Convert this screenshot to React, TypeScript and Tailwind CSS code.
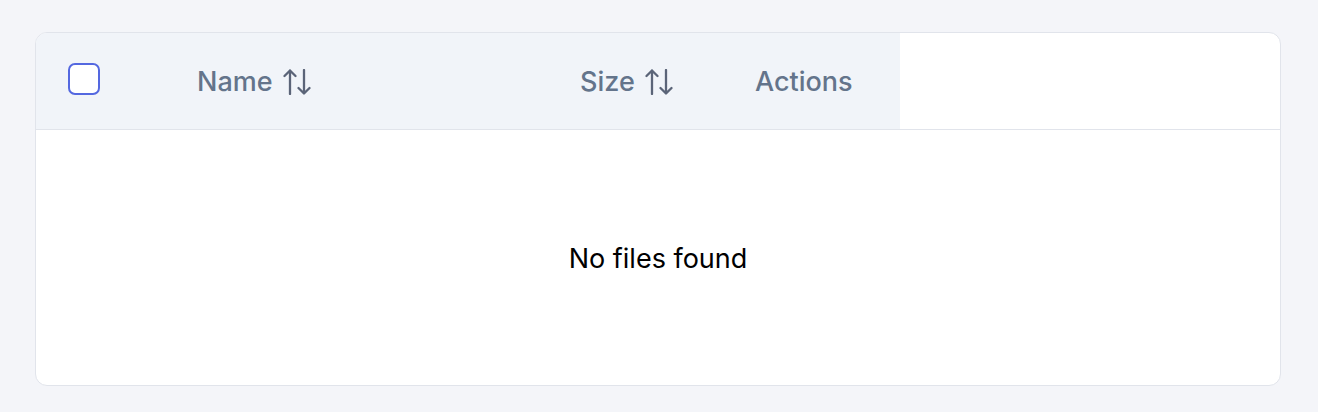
// Empty file table: header with sortable columns, single "no files" row.
function SortIcon() {
  return (
    <svg
      width="28"
      height="26"
      viewBox="0 0 28 26"
      fill="none"
      stroke="#5b6478"
      strokeWidth="2.3"
      strokeLinecap="round"
      strokeLinejoin="round"
    >
      <path d="M7 25V1.5M1.5 7 7 1.5 12.5 7" />
      <path d="M21 1v23.5M15.5 19 21 24.5 26.5 19" />
    </svg>
  );
}

export default function App() {
  return (
    <div
      className="min-h-screen bg-[#f4f5f9] pl-[35px] pr-[37px] pt-8"
      style={{ fontFamily: "Inter, 'Noto Sans', sans-serif" }}
    >
      <div className="h-[354px] overflow-hidden rounded-xl border border-[#e1e4eb] bg-white">
        <div className="flex h-[97px] border-b border-[#e1e4eb]">
          <div className="flex w-[864px] items-center bg-[#f1f4f9] pt-[2px] text-[27px] font-medium text-[#64748b]">
            <div className="-mt-[6px] flex w-[161px] pl-8">
              <span className="h-[32px] w-[32px] rounded-[7px] border-2 border-[#5468e0] bg-white" />
            </div>
            <div className="flex w-[383px] items-center gap-[10px]">
              Name
              <SortIcon />
            </div>
            <div className="flex w-[175px] items-center gap-[10px]">
              Size
              <SortIcon />
            </div>
            <div>Actions</div>
          </div>
          <div className="flex-1" />
        </div>
        <div className="flex h-[256px] items-center justify-center pt-[2px] text-[27px] text-black">
          No files found
        </div>
      </div>
    </div>
  );
}
